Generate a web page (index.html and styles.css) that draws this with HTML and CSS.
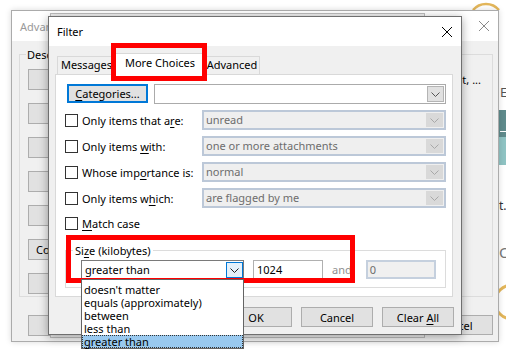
FILE: index.html
```html
<!DOCTYPE html>
<html lang="en">
<head>
<meta charset="UTF-8">
<title>Filter</title>
<link rel="stylesheet" href="styles.css">
</head>
<body>
<div class="desktop">

    <!-- app window far behind, only the right edge shows -->
    <svg class="behind" width="506" height="354" viewBox="0 0 506 354">
        <path d="M473 10 A17 17 0 0 1 499 10" fill="none" stroke="#e3b65a" stroke-width="2.5"/>
        <text x="500" y="97" font-size="13" fill="#555">E</text>
        <rect x="499" y="110" width="7" height="27" fill="#5f8b8c"/>
        <rect x="499" y="137" width="7" height="28" fill="#8fc3c3"/>
        <rect x="500" y="131" width="6" height="1" fill="#fff"/>
        <text x="499" y="210" font-size="12" fill="#333">t.</text>
        <text x="499" y="258" font-size="15" fill="#777">O</text>
        <path d="M512 285 A17 17 0 0 0 512 319" fill="none" stroke="#e3b65a" stroke-width="3"/>
    </svg>

    <div class="win back-win">
        <div class="back-title">
            <span>Advanced View Settings: Compact</span>
            <svg class="x-icon" width="10" height="10" viewBox="0 0 10 10"><path d="M0 0 L10 10 M10 0 L0 10" stroke="#8a8a8a" stroke-width="1"/></svg>
        </div>
        <div class="back-body">
            <fieldset class="back-group">
                <legend>Description</legend>
                <div class="view-row"><button class="btn view-btn">Columns...</button><span class="desc desc-end">Importance, Reminder, Icon, Flag Status, Attachment, ...</span></div>
                <div class="view-row"><button class="btn view-btn">Group By...</button><span class="desc">None</span></div>
                <div class="view-row"><button class="btn view-btn">Sort...</button><span class="desc">Received</span></div>
                <div class="view-row"><button class="btn view-btn">Filter...</button><span class="desc">Off</span></div>
                <div class="view-row"><button class="btn view-btn">Other Settings...</button><span class="desc">Fonts</span></div>
                <div class="view-row"><button class="btn view-btn btn-left">Conditional Formatting...</button><span class="desc">User</span></div>
                <div class="view-row"><button class="btn view-btn">Format Columns...</button><span class="desc"></span></div>
            </fieldset>
            <div class="back-footer">
                <button class="btn view-btn">Reset Current View</button>
                <div class="back-actions">
                    <button class="btn back-act">OK</button>
                    <button class="btn back-act">Cancel</button>
                </div>
            </div>
        </div>
    </div>

    <div class="win mid-win"></div>

    <div class="win filter-win">
        <div class="titlebar">
            <span>Filter</span>
            <svg class="x-icon" width="10" height="10" viewBox="0 0 10 10"><path d="M0 0 L10 10 M10 0 L0 10" stroke="#000" stroke-width="1"/></svg>
        </div>
        <div class="filter-body">
            <div class="tabs">
                <div class="tab tab-messages">Messages</div>
                <div class="tab active">More Choices</div>
                <div class="tab tab-advanced">Advanced</div>
            </div>
            <div class="panel">
                <div class="cat-row">
                    <button class="btn cat-btn"><u>C</u>ategories...</button>
                    <div class="combo white">
                        <span class="combo-text"></span>
                        <span class="combo-btn"><svg width="9" height="5" viewBox="0 0 9 5"><path d="M0.5 0.5 L4.5 4.5 L8.5 0.5" fill="none" stroke="#555"/></svg></span>
                    </div>
                </div>
                <div class="crit-rows">
                    <label class="check-label"><span class="checkbox"></span><span>Only items that a<u>r</u>e:</span></label>
                    <div class="combo disabled"><span class="combo-text">unread</span><span class="combo-btn"><svg width="9" height="5" viewBox="0 0 9 5"><path d="M0.5 0.5 L4.5 4.5 L8.5 0.5" fill="none" stroke="#a8a8a8"/></svg></span></div>

                    <label class="check-label"><span class="checkbox"></span><span>Only items <u>w</u>ith:</span></label>
                    <div class="combo disabled"><span class="combo-text">one or more attachments</span><span class="combo-btn"><svg width="9" height="5" viewBox="0 0 9 5"><path d="M0.5 0.5 L4.5 4.5 L8.5 0.5" fill="none" stroke="#a8a8a8"/></svg></span></div>

                    <label class="check-label"><span class="checkbox"></span><span>Whose imp<u>o</u>rtance is:</span></label>
                    <div class="combo disabled"><span class="combo-text">normal</span><span class="combo-btn"><svg width="9" height="5" viewBox="0 0 9 5"><path d="M0.5 0.5 L4.5 4.5 L8.5 0.5" fill="none" stroke="#a8a8a8"/></svg></span></div>

                    <label class="check-label"><span class="checkbox"></span><span>Only items w<u>h</u>ich:</span></label>
                    <div class="combo disabled"><span class="combo-text">are flagged by me</span><span class="combo-btn"><svg width="9" height="5" viewBox="0 0 9 5"><path d="M0.5 0.5 L4.5 4.5 L8.5 0.5" fill="none" stroke="#a8a8a8"/></svg></span></div>
                </div>
                <label class="check-label match-row"><span class="checkbox"></span><span><u>M</u>atch case</span></label>
                <fieldset class="size-group">
                    <legend>Si<u>z</u>e (kilobytes)</legend>
                    <div class="size-row">
                        <div class="combo focus">
                            <span class="combo-text">greater than</span>
                            <span class="combo-btn"><svg width="9" height="5" viewBox="0 0 9 5"><path d="M0.5 0.5 L4.5 4.5 L8.5 0.5" fill="none" stroke="#222"/></svg></span>
                        </div>
                        <div class="field">1024</div>
                        <span class="and">and</span>
                        <div class="field off">0</div>
                    </div>
                </fieldset>
            </div>
            <div class="dialog-buttons">
                <button class="btn act">OK</button>
                <button class="btn act">Cancel</button>
                <button class="btn act">Clear <u>A</u>ll</button>
            </div>
        </div>
    </div>

    <div class="callout tab-callout"></div>
    <div class="callout size-callout"></div>

    <ul class="drop-list">
        <li>doesn't matter</li>
        <li>equals (approximately)</li>
        <li>between</li>
        <li>less than</li>
        <li class="picked">greater than</li>
    </ul>
</div>
</body>
</html>
```

FILE: styles.css
```css
/* Basic styling */
* {
    box-sizing: border-box;
}
body {
    margin: 0;
    font-family: "Noto Sans", "Segoe UI", sans-serif;
    font-size: 11px;
    line-height: 15px;
    color: #000;
    background-color: #fff;
}
u {
    text-underline-offset: 2px;
}
.desktop {
    position: relative;
    width: 506px;
    height: 354px;
    overflow: hidden;
    background-color: #fff;
}
.behind {
    position: absolute;
    left: 0;
    top: 0;
    z-index: 0;
    font-family: "Noto Sans", sans-serif;
}
.win {
    position: absolute;
}
.btn {
    font: inherit;
    color: #000;
    background-color: #e1e1e1;
    border: 1px solid #adadad;
    padding: 0;
    height: 20px;
}

/* window in the back */
.back-win {
    left: 11px;
    top: 10px;
    width: 488px;
    height: 332px;
    z-index: 1;
    border: 1px solid #ababab;
    background-color: #f0f0f0;
    box-shadow: 0 0 6px rgba(0, 0, 0, 0.15);
}
.back-title {
    height: 30px;
    background-color: #fff;
    color: #9a9a9a;
    display: flex;
    align-items: center;
    justify-content: space-between;
    padding: 0 9px 0 8px;
    white-space: nowrap;
}
.back-body {
    padding: 6px 5px 0 7px;
}
.back-group {
    margin: 0;
    height: 250px;
    border: 1px solid #dcdcdc;
    padding: 7px 11px 0 8px;
}
.back-group legend {
    padding: 0 1px;
    margin-left: -2px;
}
.view-row {
    display: flex;
    align-items: center;
    height: 21px;
    margin-bottom: 13px;
    white-space: nowrap;
}
.view-btn {
    width: 150px;
    height: 21px;
    flex-shrink: 0;
}
.btn-left {
    text-align: left;
    padding-left: 7px;
}
.desc {
    margin-left: 14px;
}
.desc-end {
    margin-left: auto;
}
.back-footer {
    display: flex;
    justify-content: space-between;
    margin-top: 18px;
    padding: 0 0 0 9px;
}
.back-actions {
    display: flex;
    gap: 4px;
}
.back-act {
    width: 75px;
}

.mid-win {
    left: 50px;
    top: 13px;
    width: 375px;
    height: 325px;
    z-index: 2;
    border: 1px solid #bdbdbd;
    background-color: #f0f0f0;
}

/* Filter dialog */
.filter-win {
    left: 48px;
    top: 16px;
    width: 414px;
    height: 319px;
    z-index: 3;
    border: 1px solid #6f6f6f;
    background-color: #f0f0f0;
    box-shadow: 0 2px 9px rgba(0, 0, 0, 0.35);
}
.titlebar {
    height: 29px;
    background-color: #fff;
    display: flex;
    align-items: center;
    justify-content: space-between;
    padding: 0 9px 0 8px;
}
.filter-body {
    padding: 0 8px 0 6px;
}
.tabs {
    display: flex;
    align-items: flex-end;
    height: 28px;
    padding-left: 2px;
    position: relative;
    z-index: 1;
}
.tab {
    height: 18px;
    border: 1px solid #d9d9d9;
    border-bottom: none;
    background-color: #f0f0f0;
    text-align: center;
    line-height: 16px;
}
.tab-messages {
    width: 59px;
}
.tab.active {
    width: 92px;
    height: 22px;
    margin: 0 -2px -1px;
    background-color: #fff;
    line-height: 18px;
    position: relative;
}
.tab-advanced {
    width: 56px;
}
.panel {
    height: 223px;
    background-color: #fff;
    border: 1px solid #d9d9d9;
    padding: 9px 6px 0 9px;
}
.cat-row {
    display: flex;
    height: 20px;
    padding-left: 2px;
}
.cat-btn {
    width: 81px;
    height: 19px;
    margin-right: 6px;
    border: 2px solid #0078d7;
    line-height: 13px;
}
.combo {
    display: flex;
    height: 20px;
    padding: 1px;
    border: 1px solid #ababab;
    white-space: nowrap;
}
.combo.white {
    flex: 1;
    background-color: #fff;
}
.combo-text {
    flex: 1;
    padding-left: 3px;
    line-height: 16px;
}
.combo-btn {
    width: 17px;
    display: flex;
    align-items: center;
    justify-content: center;
    background-color: #e1e1e1;
    border: 1px solid #b4b4b4;
}
.combo.disabled {
    background-color: #efefef;
    border: 2px solid #bcc8d8;
    padding: 0;
    color: #6d6d6d;
}
.combo.disabled .combo-text {
    padding-left: 2px;
}
.combo.disabled .combo-btn {
    background-color: #d9d9d9;
    border: none;
    margin: 1px;
}
.crit-rows {
    display: grid;
    grid-template-columns: 137px 1fr;
    row-gap: 6px;
    margin-top: 6px;
}
.check-label {
    display: flex;
    align-items: center;
    gap: 4px;
    white-space: nowrap;
}
.checkbox {
    width: 13px;
    height: 13px;
    flex-shrink: 0;
    border: 1px solid #333;
    background-color: #fff;
}
.match-row {
    margin-top: 9px;
    height: 13px;
}
.size-group {
    margin: 13px 0 0;
    border: 1px solid #dcdcdc;
    padding: 2px 8px 8px 15px;
}
.size-group legend {
    padding: 0 2px;
    margin-left: -8px;
}
.size-row {
    display: flex;
    align-items: center;
    height: 19px;
}
.combo.focus {
    width: 163px;
    height: 19px;
    border-color: #7a7a7a;
    padding: 0;
    margin-right: 9px;
}
.combo.focus .combo-text {
    line-height: 17px;
}
.combo.focus .combo-btn {
    background-color: #e5f1fb;
    border: 1px solid #0078d7;
    margin: 1px 0 0;
    height: 16px;
}
.field {
    width: 70px;
    height: 19px;
    border: 1px solid #b0b0b0;
    padding-left: 3px;
    line-height: 17px;
    background-color: #fff;
}
.field.off {
    background-color: #f0f0f0;
    border: 2px solid #c5d0de;
    color: #6d6d6d;
    line-height: 15px;
    padding-left: 2px;
}
.and {
    margin: 0 14px 0 9px;
    color: #8f8f8f;
}
.dialog-buttons {
    display: flex;
    justify-content: flex-end;
    gap: 9px;
    margin: 10px -1px 0 0;
}
.act {
    width: 72px;
}

/* red highlight boxes and the open list */
.callout {
    position: absolute;
    z-index: 4;
    border: 5px solid #ff0000;
}
.tab-callout {
    left: 111px;
    top: 43px;
    width: 96px;
    height: 38px;
}
.size-callout {
    left: 66px;
    top: 235px;
    width: 289px;
    height: 48px;
}
.drop-list {
    position: absolute;
    z-index: 5;
    left: 81px;
    top: 279px;
    width: 163px;
    height: 70px;
    margin: 0;
    padding: 3px 0 0;
    list-style: none;
    background-color: #fff;
    border: 1px solid #646464;
}
.drop-list li {
    height: 13px;
    line-height: 13px;
    padding-left: 2px;
}
.drop-list .picked {
    background-color: #99c9ef;
    outline: 1px dotted #333;
    outline-offset: -1px;
}
```
